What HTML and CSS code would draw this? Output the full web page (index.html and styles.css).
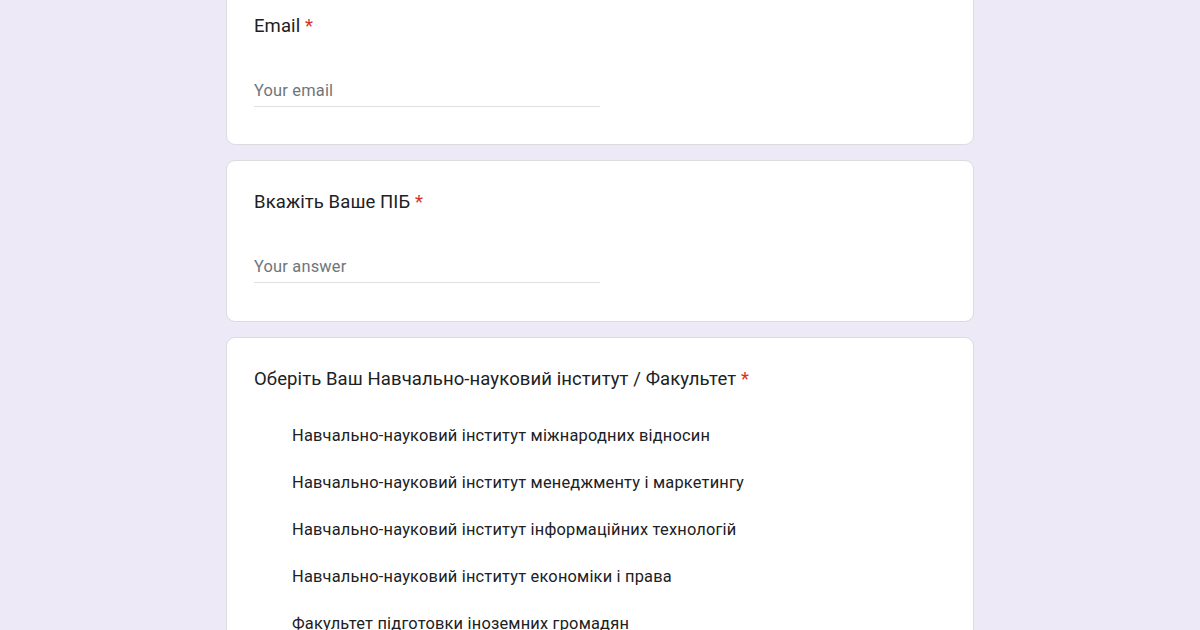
FILE: index.html
```html
<!DOCTYPE html>
<html lang="uk">
<head>
  <meta charset="UTF-8">
  <meta name="viewport" content="width=device-width, initial-scale=1.0">
  <title>Форма</title>
  <link rel="stylesheet" href="styles.css">
</head>
<body>
  <div class="form">
    <div class="card">
      <div class="question">Email <span class="req">*</span></div>
      <input class="answer" type="email" placeholder="Your email">
    </div>

    <div class="card">
      <div class="question">Вкажіть Ваше ПІБ <span class="req">*</span></div>
      <input class="answer" type="text" placeholder="Your answer">
    </div>

    <div class="card">
      <div class="question">Оберіть Ваш Навчально-науковий інститут / Факультет <span class="req">*</span></div>
      <div class="options">
        <label class="option">Навчально-науковий інститут міжнародних відносин</label>
        <label class="option">Навчально-науковий інститут менеджменту і маркетингу</label>
        <label class="option">Навчально-науковий інститут інформаційних технологій</label>
        <label class="option">Навчально-науковий інститут економіки і права</label>
        <label class="option">Факультет підготовки іноземних громадян</label>
      </div>
    </div>
  </div>
</body>
</html>
```

FILE: styles.css
```css
body {
  margin: 0;
  padding: 0;
  background: #ede9f7;
  font-family: 'Roboto', 'Liberation Sans', sans-serif;
  color: #202124;
  overflow: hidden;
}

.form {
  width: 748px;
  margin: -16px auto 0;
  display: flex;
  flex-direction: column;
  gap: 15px;
}

.card {
  box-sizing: border-box;
  background: #fff;
  border: 1px solid #dadce0;
  border-radius: 9px;
  padding: 28px 27px 37px;
}

.card:nth-child(2) {
  padding-bottom: 38px;
}

.question {
  font-size: 18.5px;
  line-height: 26px;
  letter-spacing: 0.1px;
  color: #202124;
}

.req {
  color: #d93025;
}

.answer {
  display: block;
  box-sizing: border-box;
  width: 50%;
  height: 32px;
  margin-top: 36px;
  padding: 0;
  border: none;
  border-bottom: 1px solid #e0e0e0;
  outline: none;
  font-family: inherit;
  font-size: 16.4px;
  letter-spacing: 0.2px;
  color: #202124;
  background: transparent;
}

.answer::placeholder {
  color: #70757a;
}

.options {
  margin-top: 20px;
  display: flex;
  flex-direction: column;
}

.option {
  display: flex;
  align-items: center;
  height: 47px;
  padding-left: 38px;
  font-size: 16.4px;
  letter-spacing: 0.2px;
  color: #202124;
}
```
